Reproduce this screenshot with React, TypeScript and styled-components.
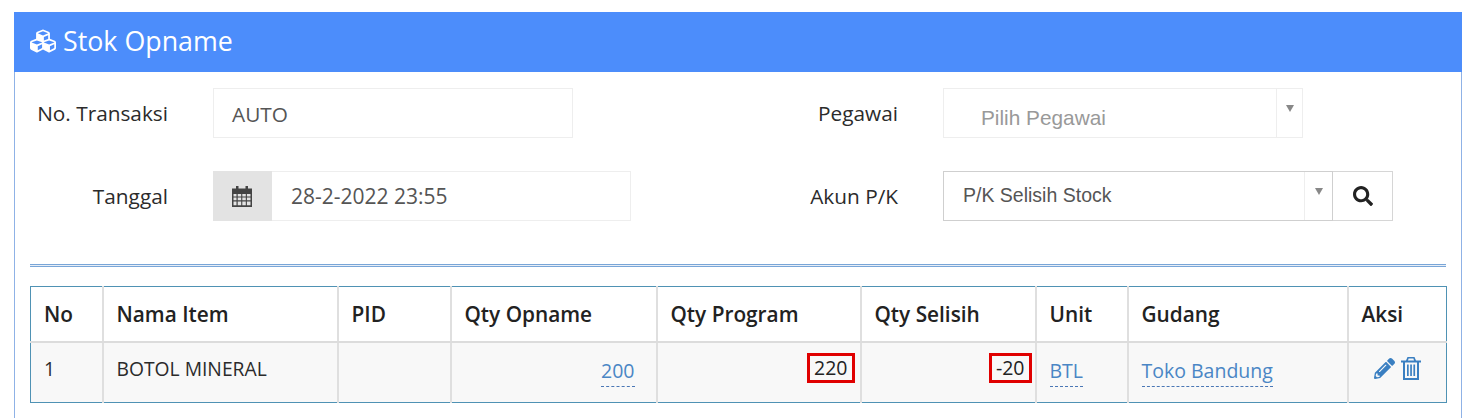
import React from "react";
import styled, { createGlobalStyle } from "styled-components";
import { FaCubes, FaPencilAlt, FaSearch } from "react-icons/fa";

const GlobalStyle = createGlobalStyle`
	html, body {
		margin: 0;
		padding: 0;
		background: #fff;
		height: 418px;
		overflow: hidden;
	}
	body {
		font-family: "Open Sans", sans-serif;
		color: #222;
	}
`;

const Page = styled.div`
	padding: 12px 14px 0;
`;

const Panel = styled.section`
	border: 1px solid #8fb2e6;
	border-top: 0;
	border-bottom: 0;
	height: 406px;
	box-sizing: border-box;
`;

const PanelHeader = styled.header`
	height: 60px;
	margin: 0 -1px;
	padding: 0 0 3px 16px;
	box-sizing: border-box;
	display: flex;
	align-items: center;
	gap: 7px;
	background: #4c8dfb;
	color: #fff;
	font-size: 26.8px;
`;

const PanelBody = styled.div`
	padding: 16px 15px 0;
`;

const FormRow = styled.div`
	display: grid;
	grid-template-columns: 730px 1fr;
	margin-bottom: 33px;
`;

const Field = styled.div`
	display: flex;
	align-items: center;
	gap: 45px;
`;

const Label = styled.label`
	width: 138px;
	flex: none;
	text-align: right;
	font-size: 20.8px;
	color: #2b2b2b;
`;

const TextBox = styled.div<{ $width: number }>`
	width: ${(p) => p.$width}px;
	height: 50px;
	box-sizing: border-box;
	border: 1px solid #eeeeee;
	display: flex;
	align-items: center;
	padding: 1px 0 0 18px;
	font-size: 20.8px;
	color: #555;
`;

const DateGroup = styled.div`
	width: 418px;
	height: 50px;
	box-sizing: border-box;
	border: 1px solid #eeeeee;
	display: flex;
	align-items: stretch;
	font-size: 21px;
	color: #555;
`;

const DateAddon = styled.span`
	width: 59px;
	flex: none;
	margin: -1px 0 -1px -1px;
	padding-right: 1px;
	box-sizing: border-box;
	background: #e3e3e3;
	display: flex;
	align-items: center;
	justify-content: center;
	color: #444;
`;

const DateValue = styled.span`
	display: flex;
	align-items: center;
	padding-left: 19px;
`;

const Select = styled.div<{ $width: number; $muted?: boolean }>`
	width: ${(p) => p.$width}px;
	height: 50px;
	box-sizing: border-box;
	border: 1px solid ${(p) => (p.$muted ? "#eeeeee" : "#cfcfcf")};
	display: flex;
	font-family: "Liberation Sans", Arial, sans-serif;
	color: ${(p) => (p.$muted ? "#999" : "#555")};
`;

const SelectText = styled.span<{ $indent: number; $drop: number; $size: number }>`
	flex: 1;
	padding: ${(p) => p.$drop}px 0 0 ${(p) => p.$indent}px;
	line-height: 24px;
	font-size: ${(p) => p.$size}px;
`;

const SelectArrow = styled.span<{ $width: number }>`
	width: ${(p) => p.$width}px;
	flex: none;
	border-left: 1px solid #eeeeee;
	display: flex;
	justify-content: center;
	padding-top: 16px;
	box-sizing: border-box;
	&::after {
		content: "";
		width: 0;
		height: 0;
		border-left: 4px solid transparent;
		border-right: 4px solid transparent;
		border-top: 7px solid #888;
	}
`;

const InputGroup = styled.div`
	display: flex;
`;

const SearchButton = styled.button`
	width: 60px;
	height: 50px;
	padding: 0;
	background: #fff;
	border: 1px solid #d6d6d6;
	border-left: 0;
	display: flex;
	align-items: center;
	justify-content: center;
	color: #222;
	font-size: 20px;
`;

const Divider = styled.hr`
	height: 1px;
	margin: 43px 0 19px;
	border: 0;
	border-top: 1px solid #79a6d8;
	border-bottom: 1px solid #79a6d8;
	background: #e8eef6;
`;

const Table = styled.table`
	width: 1416px;
	table-layout: fixed;
	border-collapse: collapse;
	border: 1px solid #4f92b4;
	font-size: 19.3px;
`;

const HeadCell = styled.th`
	height: 54px;
	padding: 0 13px;
	text-align: left;
	font-size: 20.8px;
	font-weight: 600;
	color: #222;
	border-right: 2px solid #dfdfdf;
	border-bottom: 2px solid #dcdcdc;
	&:last-child {
		border-right: 0;
	}
`;

const Cell = styled.td<{ $right?: boolean }>`
	height: 60px;
	padding: 0 12px 8px 13px;
	box-sizing: border-box;
	background: #f8f8f8;
	text-align: ${(p) => (p.$right ? "right" : "left")};
	border-right: 2px solid #dfdfdf;
	color: #2b2b2b;
	&:last-child {
		border-right: 0;
	}
`;

const Editable = styled.a<{ $shift?: number }>`
	display: inline-block;
	margin-top: 7px;
	margin-right: ${(p) => p.$shift ?? 0}px;
	padding-bottom: 1px;
	color: #4a86c5;
	font-size: 19.5px;
	line-height: 28px;
	border-bottom: 1px dashed #4a77b5;
`;

const Highlight = styled.span<{ $shift: number }>`
	display: inline-block;
	margin-right: ${(p) => p.$shift}px;
	padding: 0 4px;
	border: 3px solid #e00000;
	line-height: 24px;
	font-size: 19.5px;
	color: #222;
`;

const Actions = styled.div`
	display: flex;
	align-items: center;
	justify-content: flex-start;
	gap: 6px;
	margin-left: 12px;
	color: #3a7fc1;
	font-size: 21px;
`;

const CalendarIcon = () => (
	<svg width="20" height="21" viewBox="0 0 20 21" fill="currentColor">
		<rect x="4" y="0" width="2.5" height="4" />
		<rect x="13.5" y="0" width="2.5" height="4" />
		<path
			fillRule="evenodd"
			d="M0 2.5h20V21H0zM1.5 8v2.4h3V8zm4.2 0v2.4h3.5V8zm4.6 0v2.4h3.5V8zm4.6 0v2.4h3.6V8zM1.5 11.5v2.8h3v-2.8zm4.2 0v2.8h3.5v-2.8zm4.6 0v2.8h3.5v-2.8zm4.6 0v2.8h3.6v-2.8zM1.5 15.4v3.9h3v-3.9zm4.2 0v3.9h3.5v-3.9zm4.6 0v3.9h3.5v-3.9zm4.6 0v3.9h3.6v-3.9z"
		/>
	</svg>
);

const TrashIcon = () => (
	<svg width="20" height="23" viewBox="0 0 20 23" fill="currentColor">
		<path
			fillRule="evenodd"
			d="M6.5 0h7L15 3.5h5V5.5H18V23H2V5.5H0V3.5h5zM7.6 1.6 7 3.5h6l-.6-1.9zM4 5.5V21h12V5.5z"
		/>
		<rect x="6" y="7.5" width="1.7" height="11.5" />
		<rect x="9.2" y="7.5" width="1.7" height="11.5" />
		<rect x="12.4" y="7.5" width="1.7" height="11.5" />
	</svg>
);

const columns = [
	{ title: "No", width: 72 },
	{ title: "Nama Item", width: 235 },
	{ title: "PID", width: 113 },
	{ title: "Qty Opname", width: 206 },
	{ title: "Qty Program", width: 204 },
	{ title: "Qty Selisih", width: 175 },
	{ title: "Unit", width: 92 },
	{ title: "Gudang", width: 220 },
	{ title: "Aksi", width: 99 },
];

export default function App() {
	return (
		<Page>
			<GlobalStyle />
			<Panel>
				<PanelHeader>
					<FaCubes size={26} />
					Stok Opname
				</PanelHeader>
				<PanelBody>
					<FormRow>
						<Field>
							<Label>No. Transaksi</Label>
							<TextBox $width={360}>AUTO</TextBox>
						</Field>
						<Field>
							<Label>Pegawai</Label>
							<Select $width={360} $muted>
								<SelectText $indent={37} $drop={17} $size={20.8}>
									Pilih Pegawai
								</SelectText>
								<SelectArrow $width={26} />
							</Select>
						</Field>
					</FormRow>
					<FormRow>
						<Field>
							<Label>Tanggal</Label>
							<DateGroup>
								<DateAddon>
									<CalendarIcon />
								</DateAddon>
								<DateValue>28-2-2022 23:55</DateValue>
							</DateGroup>
						</Field>
						<Field>
							<Label>Akun P/K</Label>
							<InputGroup>
								<Select $width={390}>
									<SelectText $indent={19} $drop={11} $size={19.5}>
										P/K Selisih Stock
									</SelectText>
									<SelectArrow $width={28} />
								</Select>
								<SearchButton>
									<FaSearch />
								</SearchButton>
							</InputGroup>
						</Field>
					</FormRow>
					<Divider />
					<Table>
						<colgroup>
							{columns.map((col) => (
								<col key={col.title} style={{ width: col.width }} />
							))}
						</colgroup>
						<thead>
							<tr>
								{columns.map((col) => (
									<HeadCell key={col.title}>{col.title}</HeadCell>
								))}
							</tr>
						</thead>
						<tbody>
							<tr>
								<Cell>1</Cell>
								<Cell>BOTOL MINERAL</Cell>
								<Cell />
								<Cell $right>
									<Editable $shift={9}>200</Editable>
								</Cell>
								<Cell $right>
									<Highlight $shift={-7}>220</Highlight>
								</Cell>
								<Cell $right>
									<Highlight $shift={-9}>-20</Highlight>
								</Cell>
								<Cell>
									<Editable>BTL</Editable>
								</Cell>
								<Cell>
									<Editable>Toko Bandung</Editable>
								</Cell>
								<Cell>
									<Actions>
										<FaPencilAlt />
										<TrashIcon />
									</Actions>
								</Cell>
							</tr>
						</tbody>
					</Table>
				</PanelBody>
			</Panel>
		</Page>
	);
}
